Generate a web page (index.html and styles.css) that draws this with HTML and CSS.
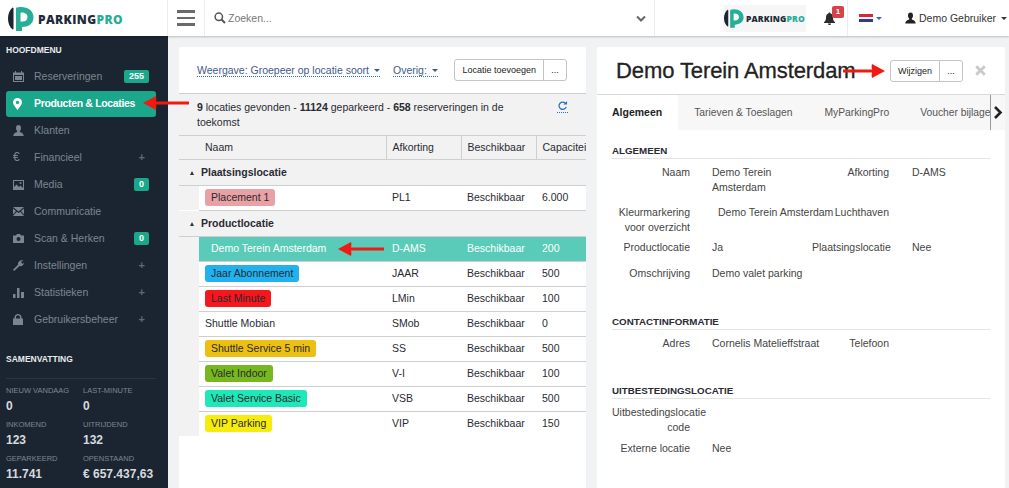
FILE: index.html
```html
<!DOCTYPE html>
<html lang="nl">
<head>
<meta charset="utf-8">
<title>ParkingPro</title>
<link rel="stylesheet" href="styles.css">
</head>
<body>
<header class="topbar">
  <div class="brand">
    <svg class="logo-mark" width="26" height="24" viewBox="0 0 26 24"><path d="M4.500 0.500C1.500 3 0 7 0 11.500S1.500 20 4.500 22.500L5.500 22V1Z" fill="#1b2531"/><path fill-rule="evenodd" d="M8 0.800C9.500 0.300 11 0 13 0C20 0 25.500 4 25.500 10.500C25.500 17 20 20 14 20V24H8ZM13.500 5.500C12.500 5.500 12.500 6 12.500 7V14.500H14.500C17.500 14.500 19.500 13 19.500 10S17 5.500 13.500 5.500Z" fill="#26ae96"/></svg>
    <span class="logo-text">PARKING<b>PRO</b></span>
  </div>
  <button class="burger" aria-label="Menu"><i></i><i></i><i></i></button>
  <div class="search">
    <svg width="12" height="12" viewBox="0 0 12 12"><circle cx="4.800" cy="4.800" r="3.700" fill="none" stroke="#555" stroke-width="1.500"/><path d="M7.500 7.500L11 11" stroke="#555" stroke-width="2"/></svg>
    <span class="search-text">Zoeken...</span>
    <svg class="search-chev" width="10" height="7" viewBox="0 0 10 7"><path d="M1 1.500L5 5.500L9 1.500" fill="none" stroke="#666" stroke-width="2"/></svg>
  </div>
  <div class="top-right">
    <div class="logo-small">
      <svg width="20" height="19" viewBox="0 0 26 24"><path d="M4.500 0.500C1.500 3 0 7 0 11.500S1.500 20 4.500 22.500L5.500 22V1Z" fill="#1b2531"/><path fill-rule="evenodd" d="M8 0.800C9.500 0.300 11 0 13 0C20 0 25.500 4 25.500 10.500C25.500 17 20 20 14 20V24H8ZM13.500 5.500C12.500 5.500 12.500 6 12.500 7V14.500H14.500C17.500 14.500 19.500 13 19.500 10S17 5.500 13.500 5.500Z" fill="#26ae96"/></svg>
      <span class="logo-text small">PARKING<b>PRO</b></span>
    </div>
    <div class="bell">
      <svg width="11" height="13" viewBox="0 0 11 13"><path d="M5.500 0.500C6.300 0.500 6.500 1 6.500 1.500C8.500 2 9 3.500 9 5.500C9 8 9.500 9 11 10.300V11H0V10.300C1.500 9 2 8 2 5.500C2 3.500 2.500 2 4.500 1.500C4.500 1 4.700 0.500 5.500 0.500ZM4 11.500H7C7 12.500 6.300 13 5.500 13S4 12.500 4 11.500Z" fill="#2b2b2b"/></svg>
      <span class="bell-badge">1</span>
    </div>
    <div class="lang">
      <span class="flag"><i class="f-red"></i><i class="f-white"></i><i class="f-blue"></i></span>
      <span class="caret blue"></span>
    </div>
    <div class="user">
      <svg width="11" height="12" viewBox="0 0 11 11"><path d="M5.500 0C7.200 0 8 1.300 8 3C8 4.300 7.500 5.500 6.800 6.100V6.900C8.500 7.500 10.500 8 10.700 11H0.300C0.500 8 2.500 7.500 4.200 6.900V6.100C3.500 5.500 3 4.300 3 3C3 1.300 3.800 0 5.500 0Z" fill="#222"/></svg>
      <span>Demo Gebruiker</span>
      <span class="caret dark"></span>
    </div>
  </div>
</header>

<div class="shell">
  <aside class="sidebar">
    <h2 class="side-title">HOOFDMENU</h2>
    <nav class="menu">
      <a class="item">
        <svg class="ico" width="11" height="11" viewBox="0 0 11 11"><path d="M0 1.500H2V0H3V1.500H8V0H9V1.500H11V11H0ZM1 4V10H10V4Z" fill="#7b8592"/><path d="M2 5H9V9H2Z" fill="#7b8592"/></svg>
        <span class="lbl">Reserveringen</span><span class="badge wide">255</span>
      </a>
      <a class="item active">
        <svg class="ico" width="9" height="12" viewBox="0 0 9 12"><path d="M4.500 0C7 0 9 1.900 9 4.300C9 7 6 10 4.500 12C3 10 0 7 0 4.300C0 1.900 2 0 4.500 0ZM4.500 2.700A1.700 1.700 0 1 0 4.500 6.100A1.700 1.700 0 1 0 4.500 2.700Z" fill="#fff"/></svg>
        <span class="lbl">Producten &amp; Locaties</span>
      </a>
      <a class="item">
        <svg class="ico" width="11" height="11" viewBox="0 0 11 11"><path d="M5.500 0C7.200 0 8 1.300 8 3C8 4.300 7.500 5.500 6.800 6.100V6.900C8.500 7.500 10.500 8 10.700 11H0.300C0.500 8 2.500 7.500 4.200 6.900V6.100C3.500 5.500 3 4.300 3 3C3 1.300 3.800 0 5.500 0Z" fill="#7b8592"/></svg>
        <span class="lbl">Klanten</span>
      </a>
      <a class="item">
        <span class="ico euro">€</span>
        <span class="lbl">Financieel</span><span class="plus">+</span>
      </a>
      <a class="item">
        <svg class="ico" width="11" height="10" viewBox="0 0 11 10"><path d="M0 0H11V10H0ZM1 1V7L3.500 4.500L6 7L7.500 5.500L10 8V1ZM7.500 2A1 1 0 1 0 7.500 4A1 1 0 1 0 7.500 2Z" fill="#7b8592" fill-rule="evenodd"/></svg>
        <span class="lbl">Media</span><span class="badge">0</span>
      </a>
      <a class="item">
        <svg class="ico" width="11" height="9" viewBox="0 0 11 9"><path d="M0 0H11L5.500 4.500ZM0 1.500L3 4L0 7.500ZM11 1.500V7.500L8 4ZM3.700 4.700L5.500 6L7.300 4.700L11 9H0Z" fill="#7b8592"/></svg>
        <span class="lbl">Communicatie</span>
      </a>
      <a class="item">
        <svg class="ico" width="11" height="9" viewBox="0 0 11 9"><path d="M0 1.500H3L4 0H7L8 1.500H11V9H0ZM5.500 3A2 2 0 1 0 5.500 7A2 2 0 1 0 5.500 3Z" fill="#7b8592" fill-rule="evenodd"/></svg>
        <span class="lbl">Scan &amp; Herken</span><span class="badge">0</span>
      </a>
      <a class="item">
        <svg class="ico" width="11" height="11" viewBox="0 0 11 11"><path d="M1.200 11L0 9.800L5 4.800C4.600 3 5.800 0.500 8.500 0.300L10.600 0L8.500 1.500V3.300L10 3.800L11 2.500C11 5 8.800 6.700 6.500 6L1.200 11Z" fill="#7b8592"/></svg>
        <span class="lbl">Instellingen</span><span class="plus">+</span>
      </a>
      <a class="item">
        <svg class="ico" width="11" height="10" viewBox="0 0 11 10"><path d="M0 6H2.500V10H0ZM4 0H6.500V10H4ZM8 4H11V10H8Z" fill="#7b8592"/></svg>
        <span class="lbl">Statistieken</span><span class="plus">+</span>
      </a>
      <a class="item">
        <svg class="ico" width="10" height="11" viewBox="0 0 10 11"><path d="M0 4.500H1.500V3.500C1.500 1.500 3 0 5 0S8.500 1.500 8.500 3.500V4.500H10V11H0ZM3 4.500H7V3.500C7 2.300 6.200 1.300 5 1.300S3 2.300 3 3.500Z" fill="#7b8592"/></svg>
        <span class="lbl">Gebruikersbeheer</span><span class="plus">+</span>
      </a>
    </nav>
    <h2 class="side-title summary">SAMENVATTING</h2>
    <div class="stats">
      <div class="stat"><small>NIEUW VANDAAG</small><strong>0</strong></div>
      <div class="stat"><small>LAST-MINUTE</small><strong>0</strong></div>
      <div class="stat"><small>INKOMEND</small><strong>123</strong></div>
      <div class="stat"><small>UITRIJDEND</small><strong>132</strong></div>
      <div class="stat"><small>GEPARKEERD</small><strong>11.741</strong></div>
      <div class="stat"><small>OPENSTAAND</small><strong>€ 657.437,63</strong></div>
    </div>
  </aside>

  <main class="content">
    <section class="card list">
      <div class="toolbar">
        <a class="dd">Weergave: Groepeer op locatie soort<span class="caret navy"></span></a>
        <a class="dd">Overig:<span class="caret navy"></span></a>
        <div class="btn-group"><button class="btn">Locatie toevoegen</button><button class="btn dots">...</button></div>
      </div>
      <div class="summary-bar">
        <p><b>9</b> locaties gevonden - <b>11124</b> geparkeerd - <b>658</b> reserveringen in de toekomst</p>
        <svg class="refresh" width="11" height="12" viewBox="0 0 11 12"><path d="M9 4A4 4 0 1 0 9.500 7.500" fill="none" stroke="#2f6fb5" stroke-width="1.400"/><path d="M10.500 1V5H6.500Z" fill="#2f6fb5"/></svg>
      </div>
      <table class="grid">
        <colgroup><col class="c0"><col class="c1"><col class="c2"><col class="c3"><col class="c4"></colgroup>
        <thead>
          <tr><th class="c-naam" colspan="2">Naam</th><th>Afkorting</th><th>Beschikbaar</th><th class="clip">Capaciteit</th></tr>
        </thead>
        <tbody>
          <tr class="group"><td colspan="5"><span class="tri"></span>Plaatsingslocatie</td></tr>
          <tr><td class="gut"></td><td><span class="tag t-pink">Placement 1</span></td><td>PL1</td><td>Beschikbaar</td><td>6.000</td></tr>
          <tr class="group"><td colspan="5"><span class="tri"></span>Productlocatie</td></tr>
          <tr class="sel"><td class="gut"></td><td><span class="tag t-none">Demo Terein Amsterdam</span></td><td>D-AMS</td><td>Beschikbaar</td><td>200</td></tr>
          <tr><td class="gut"></td><td><span class="tag t-blue">Jaar Abonnement</span></td><td>JAAR</td><td>Beschikbaar</td><td>500</td></tr>
          <tr><td class="gut"></td><td><span class="tag t-red">Last Minute</span></td><td>LMin</td><td>Beschikbaar</td><td>100</td></tr>
          <tr><td class="gut"></td><td>Shuttle Mobian</td><td>SMob</td><td>Beschikbaar</td><td>0</td></tr>
          <tr><td class="gut"></td><td><span class="tag t-amber">Shuttle Service 5 min</span></td><td>SS</td><td>Beschikbaar</td><td>500</td></tr>
          <tr><td class="gut"></td><td><span class="tag t-green">Valet Indoor</span></td><td>V-I</td><td>Beschikbaar</td><td>100</td></tr>
          <tr><td class="gut"></td><td><span class="tag t-mint">Valet Service Basic</span></td><td>VSB</td><td>Beschikbaar</td><td>500</td></tr>
          <tr class="last"><td class="gut"></td><td><span class="tag t-yellow">VIP Parking</span></td><td>VIP</td><td>Beschikbaar</td><td>150</td></tr>
        </tbody>
      </table>
    </section>

    <section class="card detail">
      <div class="detail-head">
        <h1>Demo Terein Amsterdam</h1>
        <div class="btn-group"><button class="btn">Wijzigen</button><button class="btn dots">...</button></div>
        <svg class="close" width="11" height="11" viewBox="0 0 11 11"><path d="M1.200 1.200L9.800 9.800M9.800 1.200L1.200 9.800" stroke="#c9c9c9" stroke-width="2.800"/></svg>
      </div>
      <div class="tabs">
        <span class="tab active">Algemeen</span>
        <span class="tab">Tarieven &amp; Toeslagen</span>
        <span class="tab">MyParkingPro</span>
        <span class="tab">Voucher bijlage</span>
        <span class="tab-next"><svg width="10" height="13" viewBox="0 0 10 13"><path d="M2 1L7.500 6.500L2 12" fill="none" stroke="#222" stroke-width="2.600"/></svg></span>
      </div>
      <div class="detail-body">
        <h3 class="sec">ALGEMEEN</h3>
        <div class="row r1"><span class="k">Naam</span><span class="v first">Demo Terein Amsterdam</span><span class="k">Afkorting</span><span class="v">D-AMS</span></div>
        <div class="row r2"><span class="k">Kleurmarkering voor overzicht</span><span class="v indent">Demo Terein Amsterdam</span><span class="k">Luchthaven</span><span class="v"></span></div>
        <div class="row r3"><span class="k">Productlocatie</span><span class="v first">Ja</span><span class="k">Plaatsingslocatie</span><span class="v">Nee</span></div>
        <div class="row r4"><span class="k">Omschrijving</span><span class="v first wide">Demo valet parking</span></div>
        <h3 class="sec s2">CONTACTINFORMATIE</h3>
        <div class="row r4"><span class="k">Adres</span><span class="v first single">Cornelis Matelieffstraat</span><span class="k">Telefoon</span><span class="v"></span></div>
        <h3 class="sec s3">UITBESTEDINGSLOCATIE</h3>
        <div class="row r5"><span class="k">Uitbestedingslocatie code</span><span class="v first"></span></div>
        <div class="row r4"><span class="k">Externe locatie</span><span class="v first">Nee</span></div>
      </div>
    </section>
  </main>
</div>

<svg class="arrow a1" width="46" height="14" viewBox="0 0 46 14"><path d="M46 5.500H13C13.500 4 13.500 2 13 0L0 7L13 14C13.500 12 13.500 10 13 8.500H46Z" fill="#f01a10"/></svg>
<svg class="arrow a2" width="46" height="14" viewBox="0 0 46 14"><path d="M46 5.500H13C13.500 4 13.500 2 13 0L0 7L13 14C13.500 12 13.500 10 13 8.500H46Z" fill="#f01a10"/></svg>
<svg class="arrow a3" width="42" height="14" viewBox="0 0 42 14"><path d="M0 5.500H29C28.500 4 28.500 2 29 0L42 7L29 14C28.500 12 28.500 10 29 8.500H0Z" fill="#f01a10"/></svg>
</body>
</html>
```
FILE: styles.css
```css
* { box-sizing: border-box; }
html, body { margin: 0; height: 100%; overflow: hidden; }
body { font: 10.500px/15px "Liberation Sans", Arial, sans-serif; color: #2a2a33; background: #f1f2f4; position: relative; }
h1, h2, h3, p { margin: 0; }
b, strong { font-weight: 700; }

/* top bar */
.topbar { height: 36px; display: flex; background: #fff; box-shadow: 0 1px 2px rgba(0,0,0,.22); position: relative; z-index: 2; }
.brand { width: 168px; border-right: 1px solid #eceded; display: flex; align-items: center; padding: 2px 0 0 8px; gap: 4px; }
.logo-text { font: 800 12px "Open Sans", "Liberation Sans", sans-serif; color: #1e2b3a; letter-spacing: .4px; }
.logo-text b { color: #26ae96; font-weight: 800; }
.logo-text.small { font-size: 8.500px; letter-spacing: .15px; }
.burger { width: 37px; padding: 0; border: 0; border-right: 1px solid #eceded; background: #fff; display: flex; flex-direction: column; align-items: center; justify-content: center; gap: 4px; }
.burger i { width: 18px; height: 2.500px; background: #6a6a6a; display: block; }
.search { width: 450px; display: flex; align-items: center; padding-left: 9px; gap: 2px; border-right: 1px solid #eceded; }
.search-text { color: #777; font-size: 10.500px; }
.search-chev { margin-left: auto; margin-right: 8px; }
.top-right { flex: 1; display: flex; align-items: center; }
.logo-small { margin-left: 68px; width: 83px; height: 27px; padding-left: 1px; background: #f6f6f6; display: flex; align-items: center; gap: 2px; }
.bell { margin-left: 18px; width: 23px; height: 36px; position: relative; display: flex; align-items: center; }
.bell-badge { position: absolute; left: 8px; top: 6px; width: 12px; height: 12px; background: #d9414a; border-radius: 2px; color: #fff; font: 700 8px/12px "Liberation Sans", sans-serif; text-align: center; }
.lang { width: 58px; height: 36px; border-left: 1px solid #eceded; padding-left: 11px; display: flex; align-items: center; gap: 3px; }
.flag { width: 14px; height: 8px; display: flex; flex-direction: column; }
.flag i { flex: 1; }
.f-red { background: #cf2a3a; } .f-white { background: #f4f4f4; } .f-blue { background: #2b3f86; }
.caret { display: inline-block; width: 0; height: 0; border-left: 3px solid transparent; border-right: 3px solid transparent; border-top: 3px solid #333; }
.caret.blue { border-top-color: #2f6fb5; }
.caret.navy { border-top-color: #3d5a8c; margin-left: 5px; vertical-align: 2px; }
.user { display: flex; align-items: center; gap: 3px; color: #333; font-size: 10.500px; }
.user .caret { margin-left: 2px; }

/* sidebar */
.shell { display: flex; height: 452px; }
.sidebar { width: 168px; background: #1b2531; color: #7b8592; padding: 9px 6px 0; flex: none; }
.side-title { font: 700 8.500px/11px "Liberation Sans", sans-serif; color: #e8ebee; }
.menu { margin-top: 7px; display: flex; flex-direction: column; }
.item { height: 27px; display: flex; align-items: center; padding: 0 7px 0 7px; border-radius: 3px; width: 150px; font-size: 10.500px; color: #7b8592; position: relative; }
.ico { width: 11px; flex: none; margin-right: 10px; }
svg.ico { width: auto; margin-right: 0; }
.item svg.ico + .lbl { position: absolute; left: 28px; }
.item .euro + .lbl { position: absolute; left: 28px; }
.euro { font-size: 12px; }
.item.active { background: #1aa78c; color: #fff; font-weight: 700; letter-spacing: -.35px; height: 26px; margin: .5px 0; }
.badge { margin-left: auto; margin-right: 0; width: 15px; height: 13px; border-radius: 2px; background: #1aa78c; color: #fff; font: 700 9px/13px "Liberation Sans", sans-serif; text-align: center; }
.badge.wide { width: 25px; }
.plus { margin-left: auto; margin-right: 4px; font: 700 11px/11px "Liberation Sans", sans-serif; color: #5f6873; }
.side-title.summary { margin-top: 21px; }
.stats { margin-top: 13px; border-top: 1px solid #2a3442; width: 150px; padding-top: 7px; display: grid; grid-template-columns: 77px 1fr; row-gap: 6px; }
.stat small { display: block; font-size: 7.500px; line-height: 9px; color: #7b8592; white-space: nowrap; }
.stat strong { display: block; margin-top: 3px; font-size: 12px; line-height: 16px; color: #d6dadf; white-space: nowrap; }

/* content */
.content { flex: 1; padding: 11px 4px 0 11px; display: flex; gap: 11px; min-width: 0; }
.card { background: #fff; overflow: hidden; border-radius: 2px 2px 0 0; }
.list { width: 407px; flex: none; }
.detail { flex: 1; min-width: 0; }

.toolbar { height: 47px; display: flex; align-items: center; padding: 0 19px 0 18px; border-bottom: 1px solid #cfcfcf; }
.dd { color: #3d5a8c; border-bottom: 1px dotted #2f6fb5; line-height: 12px; margin-right: 13px; white-space: nowrap; }
.btn-group { display: flex; margin-left: auto; }
.btn { height: 22px; padding: 0 7px; border: 1px solid #c4c4c4; background: #fff; font: 9px "Liberation Sans", sans-serif; color: #222; white-space: nowrap; border-radius: 3px 0 0 3px; }
.btn.dots { width: 24px; padding: 0; border-left: 1px solid #c4c4c4; margin-left: -1px; border-radius: 0 3px 3px 0; }

.summary-bar { height: 42px; background: #f2f2f2; padding: 6px 18px; display: flex; justify-content: space-between; border-bottom: 1px solid #cfcfcf; }
.summary-bar p { width: 325px; }
.refresh { margin-top: 0; border-bottom: 1px dotted #2f6fb5; height: 13px; padding-bottom: 1px; }

.grid { border-collapse: collapse; table-layout: fixed; width: 407px; }
.c0 { width: 20px; } .c1 { width: 187px; } .c2 { width: 75px; } .c3 { width: 75px; } .c4 { width: 50px; }
.grid th { height: 23px; background: #f2f2f2; font-weight: 400; text-align: left; padding: 0 6px; border-left: 1px solid #cfcfcf; border-bottom: 1px solid #cfcfcf; white-space: nowrap; overflow: hidden; }
.grid th.c-naam { border-left: 0; padding-left: 26px; }
.grid td { height: 25px; padding: 0 6px; border-bottom: 1px solid #cfcfcf; white-space: nowrap; }
.grid td.gut { background: #f2f2f2; padding: 0; border-bottom: 0; }
.grid tr.last td { border-bottom: 0; }
.group td { background: #f2f2f2; font-weight: 700; padding-left: 22px !important; height: 26px; position: relative; }
.tri { position: absolute; left: 11px; top: 11px; width: 0; height: 0; border-left: 2px solid transparent; border-right: 2px solid transparent; border-bottom: 4px solid #333; }
.tag { display: inline-block; height: 17px; line-height: 17px; padding: 0 6px; border-radius: 3px; vertical-align: middle; }
.t-pink { background: #e8a1a4; } .t-blue { background: #1fb2ee; } .t-red { background: #f5171c; }
.t-amber { background: #ecbf10; } .t-green { background: #77b81e; } .t-mint { background: #1de8b8; } .t-yellow { background: #f6ec0e; }
.sel td { background: #5acbb8; color: #fff; font-weight: 400; }
.sel td.gut { background: #f2f2f2; }
.t-none { background: none; }

/* detail */
.detail-head { height: 48px; display: flex; align-items: center; padding: 0 19px; border-bottom: 1px solid #d8d8d8; }
.detail-head h1 { font-size: 22px; font-weight: 400; -webkit-text-stroke: .3px #222; color: #222; white-space: nowrap; letter-spacing: -.1px; }
.detail-head .btn-group { margin-left: auto; margin-right: 12px; }
.close { flex: none; }
.tabs { height: 35px; background: #f7f7f7; display: flex; align-items: center; position: relative; overflow: hidden; }
.tab { padding: 0 15px; height: 35px; line-height: 35px; font-size: 10.300px; white-space: nowrap; color: #555; }
.tab:nth-child(2) { padding: 0 16px; }
.tab:nth-child(3) { padding: 0 15px 0 16px; }
.tab:nth-child(4) { padding: 0 0 0 16px; }
.tab.active { background: #fff; color: #222; font-size: 10.500px; font-weight: 700; padding: 0 16px 0 15px; }
.tab-next { position: absolute; right: 0; top: 0; width: 15px; height: 35px; background: #f7f7f7; border-left: 1px solid #999; display: flex; align-items: center; justify-content: center; }
.detail-body { padding: 14px 15px 0; }
.sec { font-size: 9.750px; line-height: 13px; font-weight: 700; color: #2a2a33; border-bottom: 1px solid #e3e3e3; padding-bottom: 1px; margin-bottom: 6px; width: 378px; }
.s2 { margin-top: 34px; }
.s3 { margin-top: 33px; }
.row { display: grid; grid-template-columns: 78px 122px 77px 1fr; color: #444; }
.k { text-align: right; }
.v { padding-left: 23px; }
.v.first { padding-left: 22px; }
.v.indent { padding-left: 28px; white-space: nowrap; }
.v.single { white-space: nowrap; }
.r1 { height: 40px; }
.r2 { height: 35px; }
.r3 { height: 26px; }
.r4 { height: 15px; }
.r5 { height: 36px; }
.wide { grid-column: span 3; }

/* annotation arrows lying over the interface */
.arrow { position: absolute; z-index: 5; }
.a1 { left: 143px; top: 96px; }
.a2 { left: 338px; top: 242px; }
.a3 { left: 843px; top: 64px; }
```
